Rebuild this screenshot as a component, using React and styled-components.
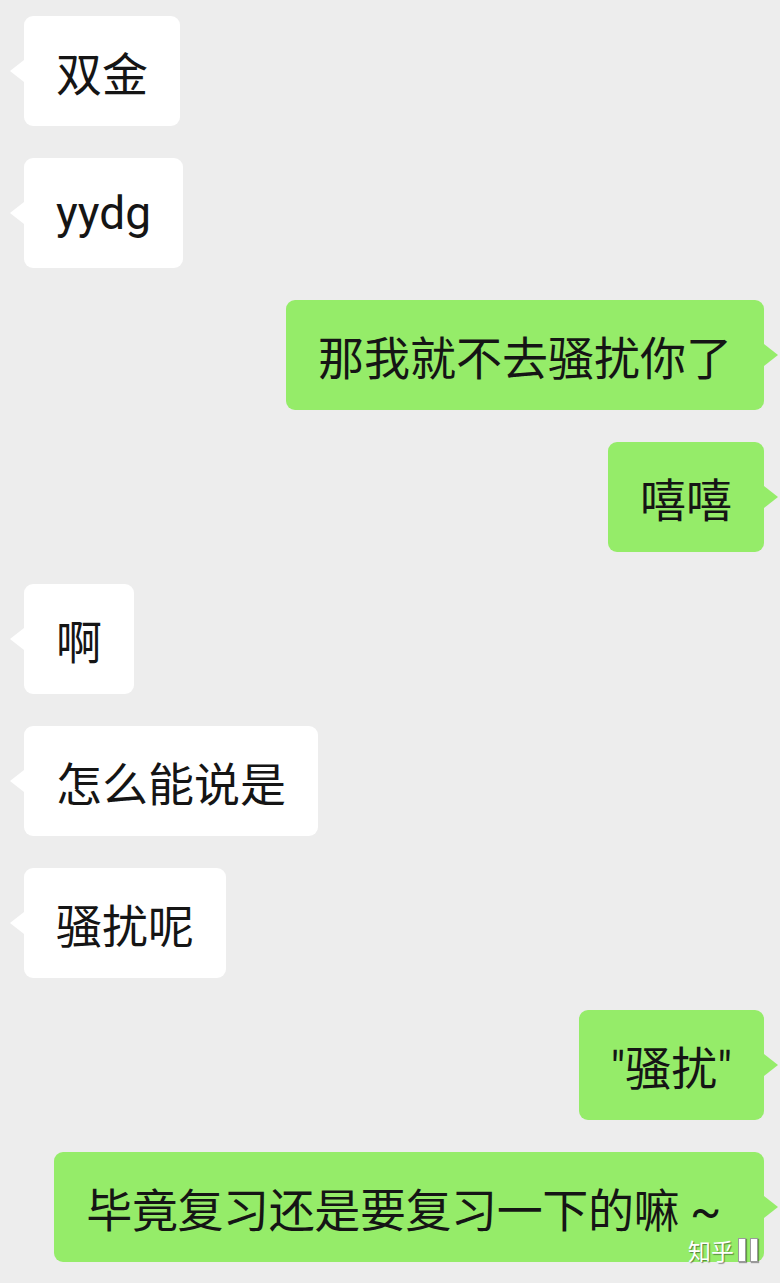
import React from "react";
import styled, { createGlobalStyle } from "styled-components";

const Global = createGlobalStyle`
  html, body { margin: 0; padding: 0; background: #ededed; }
  * { box-sizing: border-box; }
`;

const Page = styled.div`
  position: relative;
  width: 780px;
  min-height: 1283px;
  background: #ededed;
  padding: 16px 16px 21px 24px;
  display: flex;
  flex-direction: column;
  gap: 32px;
  font-family: Roboto, "Noto Sans CJK SC", sans-serif;
`;

const Row = styled.div`
  display: flex;
  justify-content: ${(p) => (p.$mine ? "flex-end" : "flex-start")};
`;

const Bubble = styled.div`
  position: relative;
  height: 110px;
  display: flex;
  align-items: center;
  padding: 0 32px;
  border-radius: 9px;
  font-size: 46px;
  color: #151515;
  white-space: pre;
  letter-spacing: ${(p) => p.$tight ? "-0.4px" : "0"};
  background: ${(p) => (p.$mine ? "#95ec69" : "#ffffff")};

  &::before {
    content: "";
    position: absolute;
    top: 50%;
    transform: translateY(-50%);
    width: 0;
    height: 0;
    border-top: 11px solid transparent;
    border-bottom: 11px solid transparent;
    ${(p) =>
      p.$mine
        ? `right: -14px; border-left: 14px solid #95ec69;`
        : `left: -14px; border-right: 14px solid #ffffff;`}
  }
`;

const Watermark = styled.div`
  position: absolute;
  right: 22px;
  bottom: 16px;
  display: flex;
  align-items: center;
  gap: 4px;
  font-family: "Noto Sans CJK SC", sans-serif;
  font-size: 23px;
  color: #ffffff;
  text-shadow: 1px 1px 1px rgba(0, 0, 0, 0.45);
`;

const Box = styled.span`
  display: inline-block;
  width: 8px;
  height: 24px;
  background: #ffffff;
  border: 1px solid #9a9a9a;
  box-shadow: 1px 1px 1px rgba(0, 0, 0, 0.35);
`;

const messages = [
  { text: "双金" },
  { text: "yydg" },
  { text: "那我就不去骚扰你了", mine: true },
  { text: "嘻嘻", mine: true },
  { text: "啊" },
  { text: "怎么能说是" },
  { text: "骚扰呢" },
  { text: "\"骚扰\"", mine: true },
  { text: "毕竟复习还是要复习一下的嘛 ~ ", mine: true, tight: true },
];

export default function App() {
  return (
    <>
      <Global />
      <Page>
        {messages.map((m, i) => (
          <Row key={i} $mine={m.mine}>
            <Bubble $mine={m.mine} $tight={m.tight}>{m.text}</Bubble>
          </Row>
        ))}
        <Watermark>
          <span>知乎</span>
          <Box />
          <Box />
        </Watermark>
      </Page>
    </>
  );
}
